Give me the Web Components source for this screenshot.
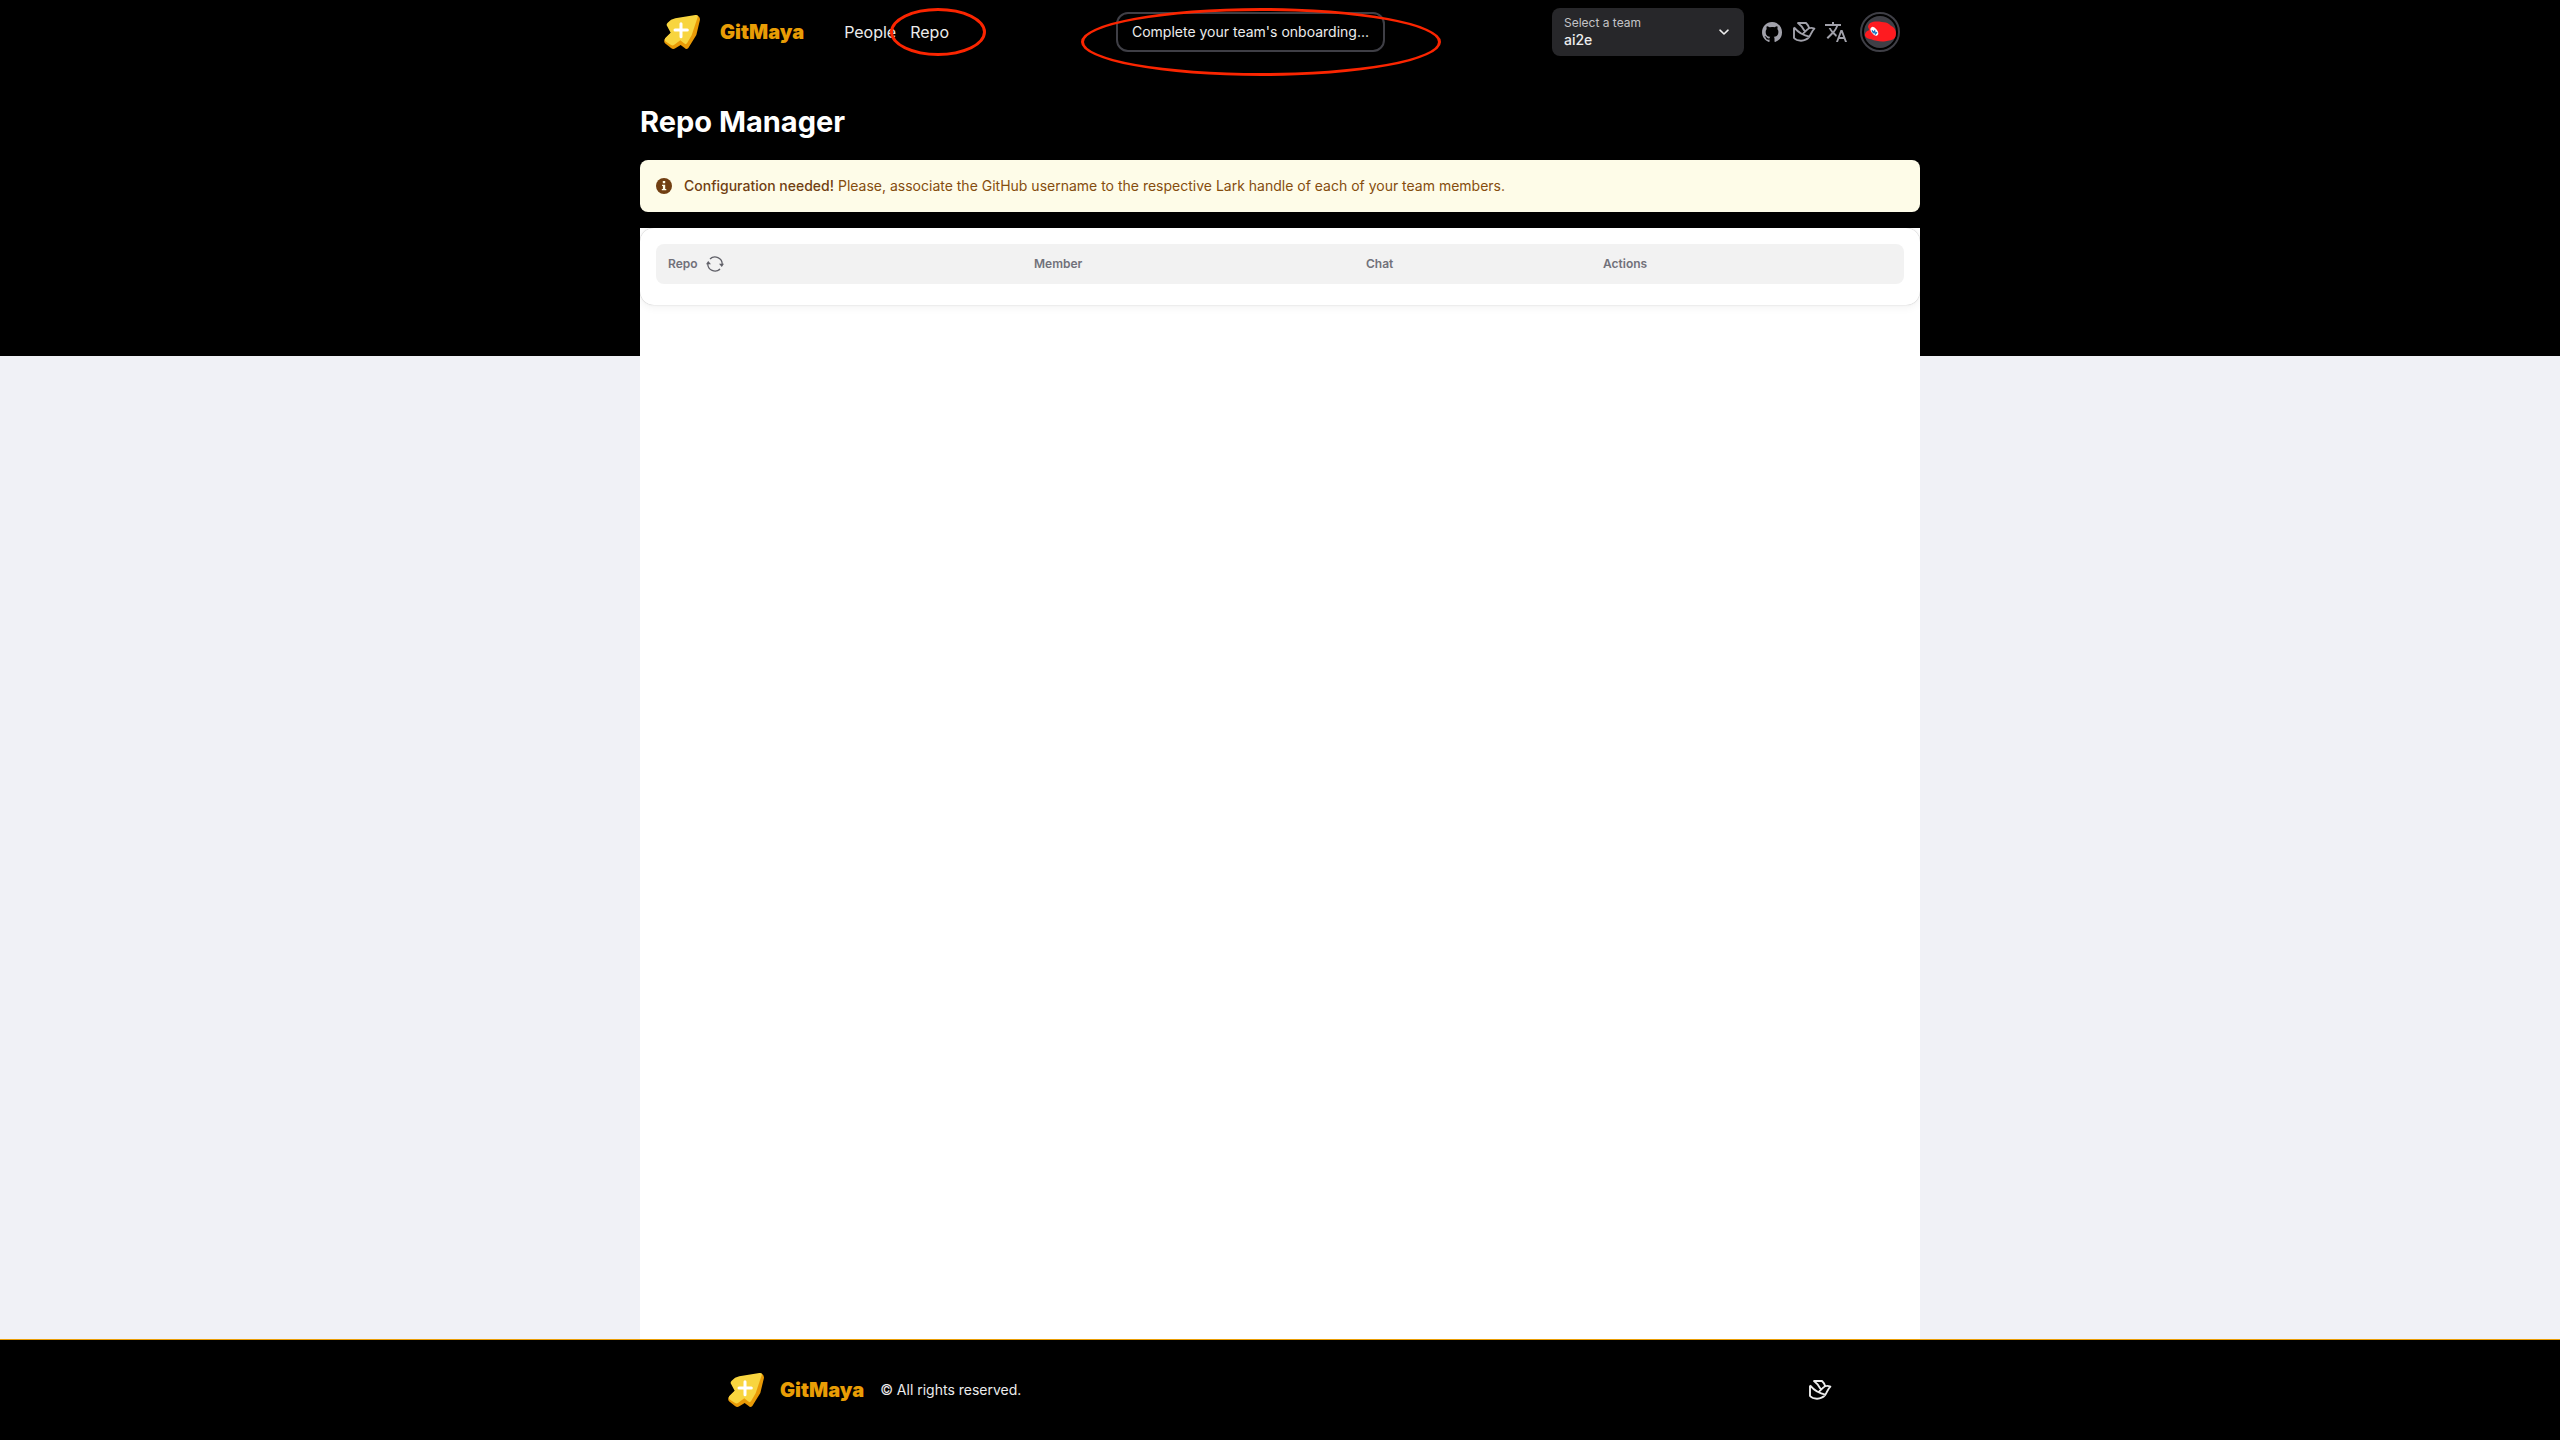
<!DOCTYPE html>
<html lang="en">
<head>
<meta charset="utf-8">
<title>GitMaya</title>
<style>
  body { margin: 0; font-family: Inter, "Noto Sans", sans-serif; }
</style>
</head>
<body>
<maya-page>
  <maya-header slot="header"></maya-header>
  <h1 slot="title">Repo Manager</h1>
  <maya-alert slot="alert"><strong slot="lead">Configuration needed!</strong> Please, associate the GitHub username to the respective Lark handle of each of your team members.</maya-alert>
  <maya-repo-table></maya-repo-table>
  <maya-footer slot="footer"></maya-footer>
</maya-page>

<script>
const define = (name, html) => {
  const template = document.createElement('template');
  template.innerHTML = html;
  customElements.define(name, class extends HTMLElement {
    constructor() {
      super();
      this.attachShadow({ mode: 'open' }).append(template.content.cloneNode(true));
    }
  });
};

define('maya-logo', `
<style>
  :host { display: flex; }
  a { display: flex; align-items: center; gap: 16px; color: #e99d05; font-size: 20px; line-height: 28px; font-weight: 900; text-decoration: none; }
  svg { width: 36px; height: 36px; margin-left: 4px; }
  :host([flush]) svg { margin-left: 0; }
  :host(:not([flush])) a { gap: 20px; }
</style>
<a href="#">
  <svg viewBox="84 126 108 108" aria-hidden="true">
    <path fill="#e99a07" d="M180 130Q192 132 192 143L181 189L157 228Q151 234 146 228L134 219L118 229Q111 233 105 228L87 214Q82 207 87 200L105 182Z"/>
    <path fill="#f8d53f" d="M95 152Q104 142 118 139L178 129Q188 128 185 136L167 190L153 214Q149 219 144 214L133 205L114 219Q109 222 104 218L88 208Q84 203 88 198L104 182L92 160Q91 155 95 152Z"/>
    <path stroke="#fff" stroke-width="9" stroke-linecap="round" d="M135 155V194M117 174H154"/>
  </svg>
  <span>GitMaya</span>
</a>`);

define('maya-icon', `
<style>
  :host { display: block; width: 24px; height: 24px; }
  svg { display: none; width: 100%; height: 100%; }
  :host([name="github"]) .github, :host([name="lark"]) .lark, :host([name="translate"]) .translate,
  :host([name="chevron"]) .chevron, :host([name="info"]) .info, :host([name="sync"]) .sync { display: block; }
</style>
<svg class="github" viewBox="0 0 24 24" fill="currentColor"><path d="M12.03 2c-5.53 0-10 4.59-10 10.25 0 4.53 2.86 8.37 6.84 9.72.5.1.68-.22.68-.49v-1.9c-2.78.61-3.37-1.2-3.37-1.2-.45-1.18-1.11-1.5-1.11-1.5-.91-.64.07-.62.07-.62 1 .07 1.53 1.05 1.53 1.05.9 1.56 2.34 1.11 2.91.85.1-.66.35-1.11.64-1.37-2.22-.25-4.56-1.13-4.56-5.06 0-1.12.39-2.03 1.03-2.75-.1-.26-.45-1.3.1-2.71 0 0 .84-.28 2.75 1.05A9.4 9.4 0 0 1 12.03 7c.85 0 1.7.12 2.5.34 1.91-1.33 2.75-1.05 2.75-1.05.55 1.41.2 2.45.1 2.71.64.72 1.03 1.63 1.03 2.75 0 3.94-2.35 4.8-4.58 5.05.36.32.68.94.68 1.9v2.8c0 .27.18.59.69.48a10.26 10.26 0 0 0 6.83-9.73C22.03 6.6 17.56 2 12.03 2Z"/></svg>
<svg class="lark" viewBox="0 0 24 24" fill="none" stroke="currentColor" stroke-width="1.9" stroke-linejoin="round"><path d="M2 7.4V18C5 21.5 13 22 17 17.2C19 14.8 19.2 11.5 22.4 8.6C19.8 7.4 17.2 7.7 15.2 9.6L10 14.6M2 7.4C5.5 11.5 10 15.4 17.4 16.6M13 11.6C11.3 8 9 5.2 6 3H14C15.7 4.6 16.8 6.4 17.2 8.3"/></svg>
<svg class="translate" viewBox="0 0 24 24" fill="currentColor"><path d="m12.87 15.07-2.54-2.51.03-.03A17.52 17.52 0 0 0 14.07 6H17V4h-7V2H8v2H1v1.99h11.17C11.5 7.92 10.44 9.75 9 11.35 8.07 10.32 7.3 9.19 6.69 8h-2c.73 1.63 1.73 3.17 2.98 4.56l-5.09 5.02L4 19l5-5 3.11 3.11.76-2.04ZM18.5 10h-2L12 22h2l1.12-3h4.75L21 22h2l-4.5-12Zm-2.62 7 1.62-4.33L19.12 17h-3.24Z"/></svg>
<svg class="chevron" viewBox="0 0 16 16" fill="none" stroke="currentColor" stroke-width="1.6" stroke-linecap="round" stroke-linejoin="round"><path d="M4 6.2 8 10l4-3.8"/></svg>
<svg class="info" viewBox="0 0 16 16"><circle cx="8" cy="8" r="8" fill="currentColor"/><path fill="#fefce8" d="M6.8 3h2.4v2.3H6.8zM6 6.7h3.2v4.2h1.1v1.4H5.8v-1.4h1.1V8H6z"/></svg>
<svg class="sync" viewBox="0 0 18 18" fill="none" stroke="currentColor" stroke-width="1.3" stroke-linejoin="round"><path d="M4 4A7.2 7.2 0 0 1 16.2 9.4M14 14A7.2 7.2 0 0 1 1.8 8.6M4 4A7 7 0 0 1 5.5 2.7M14 14A7 7 0 0 1 12.5 15.3"/><path fill="currentColor" stroke="none" d="M13 8.7h5l-2.2 3.2zM5 9.3H0l2.2-3.2z"/></svg>`);

define('maya-ring', `
<style>
  :host { display: block; position: absolute; pointer-events: none; box-sizing: border-box; border: 3px solid #fb2500; border-radius: 50%; }
</style>`);

define('maya-team-select', `
<style>
  :host { display: grid; grid-template-columns: 1fr 16px; align-items: center; box-sizing: border-box; width: 192px; height: 48px; padding: 0 12px; border-radius: 8px; background: #27272a; color: #ededee; }
  .field { display: flex; flex-direction: column; }
  label { font-size: 12px; line-height: 16px; color: #c3c3c7; }
  select { appearance: none; margin: 0; padding: 0; border: 0; background: none; color: inherit; font: 500 14px/18px Inter, sans-serif; }
  maya-icon { width: 16px; height: 16px; pointer-events: none; }
</style>
<div class="field">
  <label for="team">Select a team</label>
  <select id="team"><option>ai2e</option></select>
</div>
<maya-icon name="chevron"></maya-icon>`);

define('maya-avatar', `
<style>
  :host { display: block; width: 40px; height: 40px; }
  button { display: block; width: 100%; height: 100%; padding: 0; border: 0; border-radius: 50%; background: none; }
  svg { display: block; }
</style>
<button aria-label="Account">
  <svg viewBox="960 37 120 120">
    <circle cx="1020" cy="97" r="57" fill="#000" stroke="#3f3f46" stroke-width="6"/>
    <circle cx="1020" cy="97" r="48" fill="#3f3f46"/>
    <path fill="#fe1b20" d="M984 82C985 67 1004 63 1025 67C1045 67 1050 77 1053 78C1067 84 1070 99 1067 108C1066 117 1056 122 1044 123C1034 127 1008 126 994 119C979 116 973 111 975 103C977 95 986 92 988 91Z"/>
    <ellipse cx="1003" cy="95" rx="8.500" ry="15" fill="#fff" transform="rotate(-38 1003 95)"/>
    <path d="M996 92L1000 99L1004 94L1006 103L1011 98" fill="none" stroke="#1972bd" stroke-width="4"/>
  </svg>
</button>`);

define('maya-header', `
<style>
  :host { display: flex; justify-content: space-between; align-items: center; position: relative; height: 64px; padding: 0 20px; }
  .left, nav, .right, .icons { display: flex; align-items: center; }
  .left { gap: 40px; }
  nav { gap: 14px; }
  nav a { position: relative; color: #ececec; font-size: 16px; line-height: 24px; text-decoration: none; }
  .mark-link { left: -20px; top: -12px; width: 96px; height: 48px; }
  .onboard { position: relative; }
  .onboard button { height: 40px; padding: 0 14px; border: 2px solid #3f3f46; border-radius: 12px; background: none; color: #ececec; font: 400 14px/20px Inter, sans-serif; }
  .mark-button { left: -35px; right: -56px; top: -4px; bottom: -24px; }
  .right { gap: 12px; }
  .icons { gap: 8px; padding-left: 4px; color: #a1a1aa; }
  .icons a { color: inherit; }
</style>
<div class="left">
  <maya-logo></maya-logo>
  <nav><a href="#">People</a><a href="#">Repo<maya-ring class="mark-link"></maya-ring></a></nav>
</div>
<div class="onboard"><button>Complete your team's onboarding...</button><maya-ring class="mark-button"></maya-ring></div>
<div class="right">
  <maya-team-select></maya-team-select>
  <div class="icons">
    <a href="#" aria-label="GitHub"><maya-icon name="github"></maya-icon></a>
    <a href="#" aria-label="Lark"><maya-icon name="lark"></maya-icon></a>
    <a href="#" aria-label="Language"><maya-icon name="translate"></maya-icon></a>
  </div>
  <maya-avatar></maya-avatar>
</div>`);

define('maya-alert', `
<style>
  :host { display: flex; align-items: center; gap: 12px; padding: 16px; border-radius: 8px; background: #fefce8; color: #854d0e; font-size: 14px; line-height: 20px; }
  maya-icon { width: 16px; height: 16px; color: #713f12; }
  ::slotted(strong) { font-weight: 500; color: #713f12; }
</style>
<maya-icon name="info"></maya-icon>
<div role="status"><slot name="lead"></slot><slot></slot></div>`);

define('maya-repo-table', `
<style>
  :host { display: block; padding: 16px 16px 21px; border-radius: 14px; background: #fff; box-shadow: 0 0 5px rgba(0,0,0,.02), 0 2px 10px rgba(0,0,0,.06), 0 0 1px rgba(0,0,0,.3); }
  table { width: 100%; table-layout: fixed; border-collapse: separate; border-spacing: 0; }
  th { height: 40px; padding: 0 12px; background: #f2f2f2; color: #71717a; text-align: left; font-size: 12px; line-height: 16px; font-weight: 600; }
  th:first-child { width: 342px; border-radius: 8px 0 0 8px; }
  th:nth-child(2) { width: 308px; }
  th:nth-child(3) { width: 213px; }
  th:last-child { border-radius: 0 8px 8px 0; }
  .label { display: flex; align-items: center; gap: 8px; }
  button { padding: 0; border: 0; background: none; color: #606068; }
  maya-icon { width: 18px; height: 18px; }
</style>
<table>
  <thead><tr>
    <th scope="col"><div class="label">Repo <button aria-label="Refresh"><maya-icon name="sync"></maya-icon></button></div></th>
    <th scope="col">Member</th><th scope="col">Chat</th><th scope="col">Actions</th>
  </tr></thead>
</table>`);

define('maya-footer', `
<style>
  :host { display: block; border-top: 1px solid #e99d05; background: #000; color: #ececec; }
  .inner { display: flex; align-items: center; justify-content: space-between; box-sizing: border-box; max-width: 1152px; height: 100px; margin: 0 auto; padding: 0 24px; }
  .brand { display: flex; align-items: center; gap: 16px; font-size: 14px; line-height: 20px; }
  p { margin: 0; }
  a { color: inherit; }
</style>
<footer class="inner">
  <div class="brand"><maya-logo flush></maya-logo><p>© All rights reserved.</p></div>
  <a href="#" aria-label="Lark"><maya-icon name="lark"></maya-icon></a>
</footer>`);

define('maya-page', `
<style>
  :host { display: flex; flex-direction: column; min-height: 100vh; background: linear-gradient(#000 356px, #f0f1f6 356px); }
  .column { display: flex; flex-direction: column; flex: 1; width: 100%; max-width: 1280px; margin: 0 auto; }
  ::slotted(h1) { margin: 40px 0 20px; color: #fff; font-size: 29px; line-height: 36px; font-weight: 700; }
  main { flex: 1; margin-top: 16px; background: #fff; overflow: hidden; }
</style>
<div class="column">
  <slot name="header"></slot>
  <slot name="title"></slot>
  <slot name="alert"></slot>
  <main><slot></slot></main>
</div>
<slot name="footer"></slot>`);
</script>
</body>
</html>
